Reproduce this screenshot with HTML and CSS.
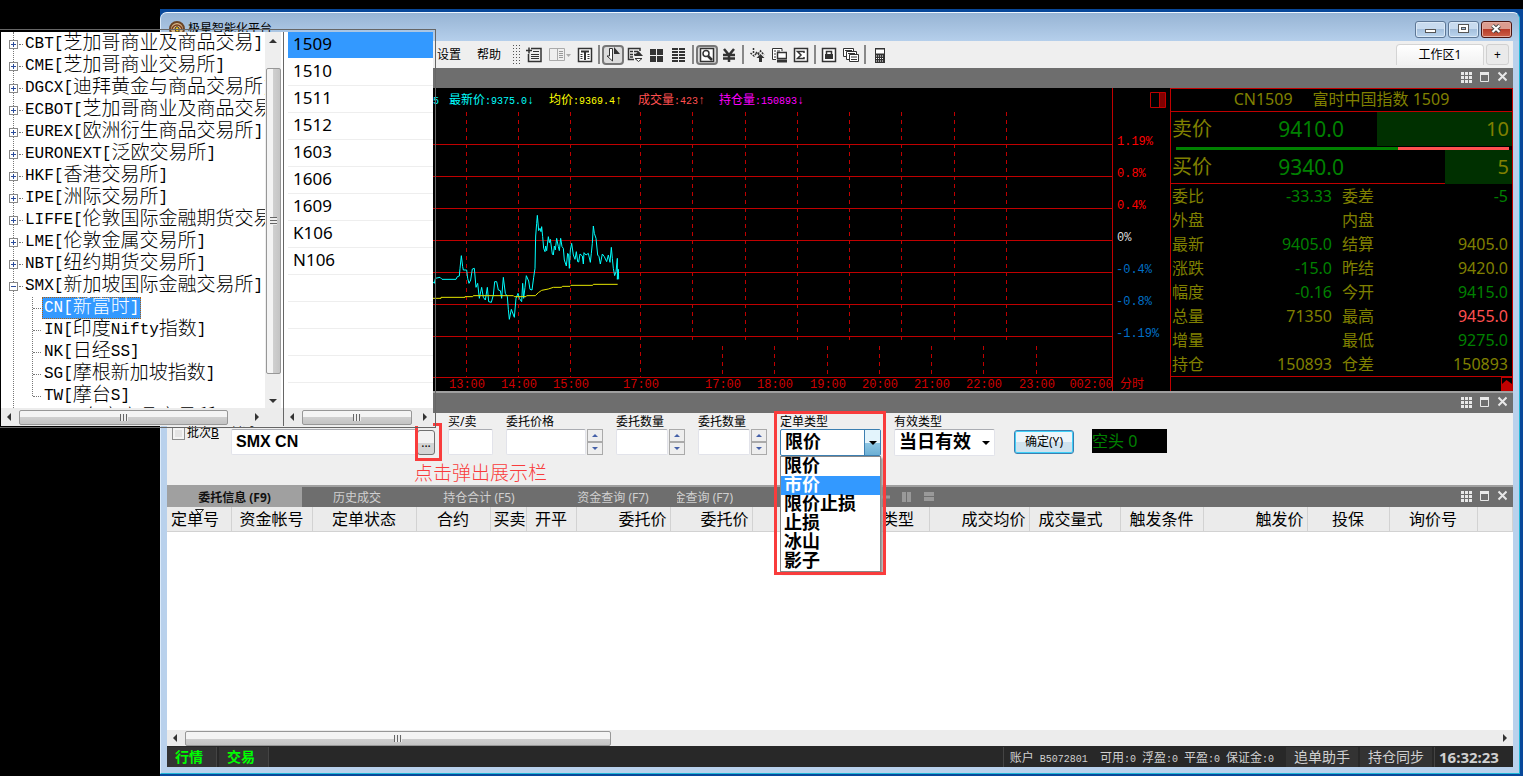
FILE: index.html
```html
<!DOCTYPE html>
<html lang="zh-CN">
<head>
<meta charset="utf-8">
<title>极星智能化平台</title>
<link rel="stylesheet" href="styles.css">
</head>
<body>
<div class="desktop">
<main class="window">
  <header class="titlebar">
    <svg class="app-icon" width="16" height="16" viewBox="0 0 16 16"><circle cx="8" cy="8" r="7" fill="#d9b98a" stroke="#6b4526" stroke-width="2"/><path d="M3 9a5 5 0 0 1 10 0" fill="none" stroke="#7a3c1c" stroke-width="1.5"/><path d="M6 7l2-1.5L10 7v4H7z" fill="#f2c21c" stroke="#333"/></svg>
    <h1 class="title">极星智能化平台</h1>
    <div class="win-buttons">
      <button class="win-btn" aria-label="最小化"><svg width="13" height="12" viewBox="0 0 13 12"><rect x="1.500" y="6.500" width="10" height="3" fill="#fff" stroke="#555"/></svg></button>
      <button class="win-btn" aria-label="最大化"><svg width="13" height="12" viewBox="0 0 13 12"><rect x="1.500" y="1.500" width="10" height="8" fill="#fff" stroke="#555"/><rect x="4.500" y="4.500" width="4" height="2" fill="#a5c0dd" stroke="#555"/></svg></button>
      <button class="win-btn close" aria-label="关闭"><svg width="13" height="12" viewBox="0 0 13 12"><path d="M2.500 2.500l7 6.500M9.500 2.500l-7 6.500" stroke="#444" stroke-width="4"/><path d="M2.500 2.500l7 6.500M9.500 2.500l-7 6.500" stroke="#fff" stroke-width="2.200"/></svg></button>
    </div>
  </header>

  <nav class="toolbar">
    <button class="menu">设置</button>
    <button class="menu">帮助</button>
    <span class="grip"></span>
    <button class="tool" aria-label="添加列表"><svg width="16" height="16" viewBox="0 0 16 16"><path d="M5 1.500h10v13H2.500V7M0 3.500h6M3 .5v6" fill="none" stroke="#333" stroke-width="1.500"/><path d="M7 4.500h6M5 7.500h8M5 9.500h8M5 11.500h8" stroke="#333"/></svg></button>
    <button class="tool wide" aria-label="面板"><svg width="24" height="16" viewBox="0 0 24 16"><path d="M1.500 1.500h15v12h-15zM9.500 1.500v12" fill="none" stroke="#aaa"/><path d="M11 4.500h4M11 6.500h4M11 8.500h4M11 10.500h4" stroke="#999"/><path d="M18 7h5l-2.500 3z" fill="#aaa"/></svg></button>
    <button class="tool" aria-label="文本"><svg width="16" height="16" viewBox="0 0 16 16"><path d="M1.500 1.500h13v13h-13z" fill="#fff" stroke="#333" stroke-width="1.500"/><path d="M4 4.500h8M8 4v9" stroke="#333" stroke-width="2"/><path d="M3.500 7.500h2M3.500 9.500h2M3.500 11.500h2M10.500 7.500h2M10.500 9.500h2M10.500 11.500h2" stroke="#333"/></svg></button>
    <span class="sep"></span>
    <button class="tool pressed" aria-label="买卖"><svg width="16" height="16" viewBox="0 0 16 16"><path d="M4.500 1.500h3V14L2 9h2.500z" fill="#fff" stroke="#333"/><path d="M9 0l6 7h-3H9v6z" fill="#333"/></svg></button>
    <button class="tool" aria-label="排序列表"><svg width="16" height="16" viewBox="0 0 16 16"><path d="M13 4V1.500H1.500v11H7" fill="none" stroke="#333" stroke-width="1.500"/><path d="M3 4.500h3M7 4.500h4M3 7.500h3M7 7.500h2M3 10h3" stroke="#333" stroke-width="1.500"/><path d="M7 9h9l-4.500-5z" fill="#333"/><path d="M8 11.500h7l-3.500 3z" fill="#fff" stroke="#333"/></svg></button>
    <button class="tool" aria-label="四格"><svg width="16" height="16" viewBox="0 0 16 16"><path d="M1 2h6v6H1zM8 2h6v6H8zM1 9h6v6H1zM8 9h6v6H8z" fill="#333"/></svg></button>
    <button class="tool" aria-label="列表"><svg width="16" height="16" viewBox="0 0 16 16"><path d="M1 2h6M8 2h6M1 5h6M8 5h6M1 8h6M8 8h6M1 11h6M8 11h6M1 14h6M8 14h6" stroke="#333" stroke-width="2"/></svg></button>
    <span class="sep"></span>
    <button class="tool pressed" aria-label="查询"><svg width="16" height="16" viewBox="0 0 16 16"><path d="M1.500 1.500h13v13h-13z" fill="#fff" stroke="#333" stroke-width="1.500"/><circle cx="7" cy="6.500" r="3" fill="none" stroke="#333" stroke-width="1.500"/><path d="M9 9l4 4" stroke="#333" stroke-width="2.500"/></svg></button>
    <button class="tool" aria-label="资金"><svg width="16" height="16" viewBox="0 0 16 16"><path d="M3 2l5 6 5-6M8 8v7M2 8h12M2 11.500h12" fill="none" stroke="#333" stroke-width="2.500"/></svg></button>
    <span class="sep"></span>
    <button class="tool" aria-label="转换"><svg width="16" height="16" viewBox="0 0 16 16"><path d="M4.500 1v5M1.500 6L5 9l2.500-3M7 5l3 3M9 7l2.500-3L15 8" fill="none" stroke="#333" stroke-width="1.500" stroke-dasharray="2 1"/><path d="M10 15v-4H7.500L11.500 7l4 4H13v4z" fill="#333"/></svg></button>
    <button class="tool" aria-label="窗口"><svg width="16" height="16" viewBox="0 0 16 16"><path d="M11 4V1.500H1.500v11H5" fill="#fff" stroke="#333"/><path d="M3 4h2M6 4h3M3 7h2M3 10h2" stroke="#333"/><path d="M6.500 5.500h9v6h-9z" fill="#fff" stroke="#333" stroke-width="1.500"/><path d="M6 14h10" stroke="#333" stroke-width="3"/></svg></button>
    <button class="tool" aria-label="合计"><svg width="16" height="16" viewBox="0 0 16 16"><path d="M1.500 1.500h13v13h-13z" fill="#fff" stroke="#333" stroke-width="1.500"/><path d="M11 6V4.500H4.500L8 8l-3.500 3.500H11V10" fill="none" stroke="#333" stroke-width="1.500"/></svg></button>
    <span class="sep"></span>
    <button class="tool" aria-label="锁定"><svg width="16" height="16" viewBox="0 0 16 16"><path d="M1.500 1.500h13v13h-13z" fill="#fff" stroke="#333" stroke-width="1.500"/><path d="M4 7h8v5H4z" fill="#333"/><path d="M5.500 7V4.500h5V7" fill="none" stroke="#333" stroke-width="1.500"/></svg></button>
    <button class="tool" aria-label="层叠"><svg width="16" height="16" viewBox="0 0 16 16"><path d="M.5 1.500h10v8H.5z" fill="#fff" stroke="#333"/><path d="M3.500 4.500h10v8h-10z" fill="#fff" stroke="#333"/><path d="M6.500 7.500h9v7h-9z" fill="#fff" stroke="#333"/><path d="M2 3.500h7M5 6.500h7M8 10h6M8 12.500h6" stroke="#333"/></svg></button>
    <span class="sep"></span>
    <button class="tool" aria-label="计算器"><svg width="16" height="16" viewBox="0 0 16 16"><path d="M4 1h10v15H4z" fill="#333"/><path d="M5 2.500h8v4H5z" fill="#fff"/><path d="M5 9h8M5 11.500h8M5 14h8" stroke="#fff" stroke-dasharray="1 1"/></svg></button>
    <div class="workspaces">
      <button class="workspace">工作区1</button>
      <button class="workspace add">+</button>
    </div>
  </nav>

  <div class="panel-bar first">
    <div class="panel-icons"><svg width="46" height="12" viewBox="0 0 46 12"><path d="M0 1h3v3H0zM4 1h3v3H4zM8 1h3v3H8zM0 5h3v3H0zM4 5h3v3H4zM8 5h3v3H8zM0 9h3v3H0zM4 9h3v3H4zM8 9h3v3H8z" fill="#e8e8e8"/><path d="M19.500 2h8v8.500h-8z" fill="none" stroke="#e8e8e8"/><path d="M19 2.500h9" stroke="#e8e8e8" stroke-width="3"/><path d="M37.500 1.500l8 8M45.500 1.500l-8 8" stroke="#e8e8e8" stroke-width="2"/></svg></div>
  </div>

  <section class="market">
    <svg class="chart" viewBox="167 88 1003 303" role="img" aria-label="分时走势">
      <g class="grid">
        <path d="M167 144.500h946M167 176.500h946M167 208.500h946M167 240.500h946M167 272.500h946M167 304.500h946M167 336.500h946M167 377.500h946M1112.500 88v303"/>
        <path class="dash" d="M466.500 112v265M518.500 112v265M570.500 112v265M640.500 112v265M692.500 112v232M745.500 112v232M797.500 112v232M849.500 112v232M901.500 112v232M954.500 112v232M1006.500 112v232M722.500 346v30M774.500 346v30M827.500 346v30M879.500 346v30M931.500 346v30M983.500 346v30M1036.500 346v30"/>
        <path d="M1150.500 92.500h15v15h-15zM1159.500 92v15"/>
      </g>
      <path d="M1160 93h5v14h-5z" fill="#800000"/>
      <svg x="430" y="200" width="380" height="200" viewBox="0 0 1140 600">
        <polyline class="price" points="9,245 13,250 16,235 30,232 36,238 78,238 82,230 88,228 90,205 94,167 98,200 100,210 110,210 113,235 117,250 122,240 127,207 133,205 138,262 143,250 148,295 155,262 160,292 166,300 172,262 176,305 184,307 190,285 194,245 200,245 205,270 211,272 215,295 220,232 226,280 232,290 235,328 238,358 244,328 253,352 258,295 264,280 268,295 275,305 278,250 281,295 285,262 289,227 296,243 300,268 306,270 311,232 315,205 317,108 320,70 322,46 326,92 330,85 333,95 335,80 338,110 341,145 345,155 347,138 350,152 355,110 358,128 361,118 367,162 370,165 373,138 376,150 380,115 385,140 388,152 392,115 396,140 400,145 403,180 409,198 413,160 416,165 418,205 421,150 425,130 430,165 435,178 439,155 443,185 446,186 450,162 457,168 460,192 462,158 468,165 475,160 481,187 484,160 487,130 490,78 493,100 498,115 503,165 507,170 511,192 517,162 523,170 530,185 535,165 540,187 544,142 547,175 550,205 554,227 558,215 562,175 562,238 565,208 566,238"/>
        <polyline class="average" points="9,295 33,295 33,292 105,292 105,290 128,290 130,287 250,287 253,290 288,290 290,287 316,287 325,278 335,271 355,267 370,262 395,262 397,259 420,259 423,256 488,256 490,253 563,253"/>
      </svg>
      <g class="legend">
        <text x="433" y="104" fill="#0ff">5</text>
        <text x="449" y="104" fill="#0ff"><tspan class="zh">最新价</tspan>:9375.0<tspan class="dir">↓</tspan></text>
        <text x="549" y="104" fill="#ff0"><tspan class="zh">均价</tspan>:9369.4<tspan class="dir">↑</tspan></text>
        <text x="638" y="104" fill="#ff5050"><tspan class="zh">成交量</tspan>:423<tspan class="dir">↑</tspan></text>
        <text x="719" y="104" fill="#f0f"><tspan class="zh">持仓量</tspan>:150893<tspan class="dir">↓</tspan></text>
      </g>
      <g class="axis times">
        <text x="467" y="388">13:00</text><text x="519" y="388">14:00</text><text x="571" y="388">15:00</text><text x="641" y="388">17:00</text><text x="723" y="388">17:00</text><text x="775" y="388">18:00</text><text x="828" y="388">19:00</text><text x="880" y="388">20:00</text><text x="932" y="388">21:00</text><text x="984" y="388">22:00</text><text x="1037" y="388">23:00</text><text x="1091" y="388">002:00</text><text x="1132" y="388">分时</text>
      </g>
      <g class="axis">
        <text x="1117" y="145" fill="#f00">1.19%</text><text x="1117" y="177" fill="#f00">0.8%</text><text x="1117" y="209" fill="#f00">0.4%</text><text x="1117" y="241" fill="#ddd">0%</text><text x="1116" y="273" fill="#0070c8">-0.4%</text><text x="1116" y="305" fill="#0070c8">-0.8%</text><text x="1116" y="337" fill="#0070c8">-1.19%</text>
      </g>
    </svg>

    <section class="quote">
      <h2 class="quote-title"><span>CN1509</span><span>富时中国指数 1509</span></h2>
      <div class="level"><span>卖价</span><span class="level-price">9410.0</span><span class="volume ask">10</span></div>
      <div class="ratio"></div>
      <div class="level buy"><span>买价</span><span class="level-price">9340.0</span><span class="volume bid">5</span></div>
      <table class="quote-table">
        <tr><th>委比</th><td class="down">-33.33</td><th>委差</th><td class="down">-5</td></tr>
        <tr><th>外盘</th><td></td><th>内盘</th><td></td></tr>
        <tr><th>最新</th><td class="down">9405.0</td><th>结算</th><td>9405.0</td></tr>
        <tr><th>涨跌</th><td class="down">-15.0</td><th>昨结</th><td>9420.0</td></tr>
        <tr><th>幅度</th><td class="down">-0.16</td><th>今开</th><td class="down">9415.0</td></tr>
        <tr><th>总量</th><td>71350</td><th>最高</th><td class="up">9455.0</td></tr>
        <tr><th>增量</th><td></td><th>最低</th><td class="down">9275.0</td></tr>
        <tr><th>持仓</th><td>150893</td><th>仓差</th><td>150893</td></tr>
      </table>
      <div class="quote-foot"><svg width="11" height="14" viewBox="0 0 11 14"><path d="M0 0h11v14H0z" fill="#c00000"/><path d="M1 1h10v6L5.500 3 1 7z" fill="#000"/></svg></div>
    </section>
  </section>

  <div class="panel-bar">
    <div class="panel-icons"><svg width="46" height="12" viewBox="0 0 46 12"><path d="M0 1h3v3H0zM4 1h3v3H4zM8 1h3v3H8zM0 5h3v3H0zM4 5h3v3H4zM8 5h3v3H8zM0 9h3v3H0zM4 9h3v3H4zM8 9h3v3H8z" fill="#e8e8e8"/><path d="M19.500 2h8v8.500h-8z" fill="none" stroke="#e8e8e8"/><path d="M19 2.500h9" stroke="#e8e8e8" stroke-width="3"/><path d="M37.500 1.500l8 8M45.500 1.500l-8 8" stroke="#e8e8e8" stroke-width="2"/></svg></div>
  </div>

  <form class="order">
    <label class="batch"><input type="checkbox">批次<u>B</u></label>
    <div class="field contract">
      <label for="contract">合约</label>
      <div class="row"><input id="contract" type="text" value="SMX CN"><button class="more" type="button" aria-label="选择合约">...</button></div>
      <span class="mark mark-more"></span>
      <p class="note">点击弹出展示栏</p>
    </div>
    <div class="field side"><label for="side">买/卖</label><input id="side" type="text"></div>
    <div class="field price-field"><label for="price">委托价格</label><div class="row"><input id="price" type="text"><span class="spin"><button type="button" aria-label="增加"></button><button type="button" aria-label="减少" class="dec"></button></span></div></div>
    <div class="field qty"><label for="qty">委托数量</label><div class="row"><input id="qty" type="text"><span class="spin"><button type="button" aria-label="增加"></button><button type="button" aria-label="减少" class="dec"></button></span></div></div>
    <div class="field qty"><label for="qty2">委托数量</label><div class="row"><input id="qty2" type="text"><span class="spin"><button type="button" aria-label="增加"></button><button type="button" aria-label="减少" class="dec"></button></span></div></div>
    <div class="field choice open">
      <label for="type">定单类型</label>
      <select id="type"><option>限价</option><option>市价</option><option>限价止损</option><option>止损</option><option>冰山</option><option>影子</option></select>
      <span class="arrow"></span>
      <ul class="options"><li>限价</li><li class="on">市价</li><li>限价止损</li><li>止损</li><li>冰山</li><li>影子</li></ul>
      <span class="mark mark-type"></span>
    </div>
    <div class="field choice">
      <label for="valid">有效类型</label>
      <select id="valid"><option>当日有效</option></select>
      <span class="arrow"></span>
    </div>
    <button class="confirm" type="button">确定(Y)</button>
    <output class="position">空头 0</output>
  </form>

  <div class="tabs">
    <button class="tab active">委托信息 (F9)</button>
    <button class="tab history">历史成交</button>
    <button class="tab">持仓合计 (F5)</button>
    <button class="tab">资金查询 (F7)</button>
    <button class="tab cut">资金查询 (F7)</button>
    <svg class="layout-icons" width="56" height="12" viewBox="0 0 56 12"><path d="M0 6h11M5.500 1v10" stroke="#999" stroke-width="3"/><path d="M23 1h4v10h-4zM28 1h4v10h-4zM45 1h10v4H45zM45 6h10v4H45z" fill="#999"/></svg>
    <div class="panel-icons"><svg width="46" height="12" viewBox="0 0 46 12"><path d="M0 1h3v3H0zM4 1h3v3H4zM8 1h3v3H8zM0 5h3v3H0zM4 5h3v3H4zM8 5h3v3H8zM0 9h3v3H0zM4 9h3v3H4zM8 9h3v3H8z" fill="#e8e8e8"/><path d="M19.500 2h8v8.500h-8z" fill="none" stroke="#e8e8e8"/><path d="M19 2.500h9" stroke="#e8e8e8" stroke-width="3"/><path d="M37.500 1.500l8 8M45.500 1.500l-8 8" stroke="#e8e8e8" stroke-width="2"/></svg></div>
  </div>

  <section class="orders">
    <table class="orders-table">
      <colgroup><col class="w64"><col class="w81"><col class="w104"><col class="w74"><col class="w36"><col class="w50"><col class="w94"><col class="w82"><col class="w83"><col class="w94"><col class="w100"><col class="w91"><col class="w83"><col class="w104"><col class="w82"><col class="w88"><col></colgroup>
      <thead><tr><th class="left sorted">定单号<svg class="sort" width="9" height="6" viewBox="0 0 9 6"><path d="M.5.5h8l-4 4.500z" fill="#fff" stroke="#222"/></svg></th><th>资金帐号</th><th>定单状态</th><th>合约</th><th>买卖</th><th>开平</th><th class="right">委托价</th><th class="right">委托价</th><th></th><th>定单类型</th><th class="right">成交均价</th><th class="left wide-left">成交量式</th><th>触发条件</th><th class="right">触发价</th><th>投保</th><th>询价号</th><th></th></tr></thead>
    </table>
  </section>
  <div class="hbar"><i class="tri west"></i><span class="thumb"></span><i class="tri east"></i></div>

  <footer class="status">
    <button class="view">行情</button>
    <button class="view">交易</button>
    <div class="account"><span><span class="zh">账户</span> B5072801</span><span><span class="zh">可用</span>:0 <span class="zh">浮盈</span>:0 <span class="zh">平盈</span>:0 <span class="zh">保证金</span>:0</span></div>
    <button class="helper">追单助手</button>
    <button class="helper">持仓同步</button>
    <time class="clock">16:32:23</time>
  </footer>
</main>
</div>

<aside class="picker">
  <div class="tree-pane">
    <div class="tree-view">
      <ul class="tree">
        <li><i class="box"></i>CBT[<b>芝加哥商业及商品交易</b>]</li>
        <li><i class="box"></i>CME[<b>芝加哥商业交易所</b>]</li>
        <li><i class="box"></i>DGCX[<b>迪拜黄金与商品交易所</b>]</li>
        <li><i class="box"></i>ECBOT[<b>芝加哥商业及商品交易</b>]</li>
        <li><i class="box"></i>EUREX[<b>欧洲衍生商品交易所</b>]</li>
        <li><i class="box"></i>EURONEXT[<b>泛欧交易所</b>]</li>
        <li><i class="box"></i>HKF[<b>香港交易所</b>]</li>
        <li><i class="box"></i>IPE[<b>洲际交易所</b>]</li>
        <li><i class="box"></i>LIFFE[<b>伦敦国际金融期货交易所</b>]</li>
        <li><i class="box"></i>LME[<b>伦敦金属交易所</b>]</li>
        <li><i class="box"></i>NBT[<b>纽约期货交易所</b>]</li>
        <li class="expanded"><i class="box minus"></i>SMX[<b>新加坡国际金融交易所</b>]
          <ul class="branch">
            <li><span class="picked">CN[<b>新富时</b>]</span></li>
            <li><span>IN[<b>印度</b>Nifty<b>指数</b>]</span></li>
            <li><span>NK[<b>日经</b>SS]</span></li>
            <li><span>SG[<b>摩根新加坡指数</b>]</span></li>
            <li><span>TW[<b>摩台</b>S]</span></li>
          </ul>
        </li>
        <li><i class="box"></i>TOCOM[<b>东京商品交易所</b>]</li>
      </ul>
      <div class="vbar"><i class="tri north"></i><span class="thumb"></span><i class="tri south"></i></div>
    </div>
    <div class="hbar"><i class="tri west"></i><span class="thumb"></span><i class="tri east"></i></div>
  </div>
  <div class="month-pane">
    <ul class="months"><li class="on">1509</li><li>1510</li><li>1511</li><li>1512</li><li>1603</li><li>1606</li><li>1609</li><li>K106</li><li>N106</li><li></li><li></li><li></li><li></li><li></li></ul>
    <div class="hbar"><i class="tri west"></i><span class="thumb"></span><i class="tri east"></i></div>
  </div>
</aside>
</body>
</html>
```
FILE: styles.css
```css
* { box-sizing: border-box; }
body {
  margin: 0;
  min-height: 100vh;
  display: flex;
  background: #000;
  color: #000;
  font: 12px/16px "Noto Sans", "Noto Sans CJK SC", sans-serif;
  overflow: hidden;
}
ul, h1, h2, p { margin: 0; padding: 0; list-style: none; font-size: inherit; font-weight: normal; }
button { border: 0; padding: 0; background: none; color: inherit; font: inherit; }
svg { display: block; flex: none; }

.desktop { flex: 1; min-width: 0; display: flex; margin: 9px 0 0 160px; padding: 3px 3px 2px 0; background: #08489a; }
.window { flex: 1; min-width: 0; display: flex; flex-direction: column; padding: 0 6px 6px; border: 1px solid; border-color: #eef6ff #20b8d8 #20b8d8 #dcebfa; border-radius: 7px 7px 0 0; background: #b9d1ec; }

.titlebar { height: 28px; display: flex; align-items: center; margin: 0 -6px; padding: 4px 7px 0 8px; gap: 3px; border-radius: 6px 6px 0 0; background: linear-gradient(#97b4d4, #b5cfeb); }
.title { flex: 1; }
.win-buttons { display: flex; gap: 2px; height: 24px; align-items: center; }
.win-btn { width: 31px; height: 17px; display: flex; align-items: center; justify-content: center; border: 1px solid #5d7796; border-radius: 3px; background: linear-gradient(#c8dbef 45%, #a5c0dd 50%, #bcd5ee); box-shadow: inset 0 0 0 1px #dbe9f7; }
.win-btn.close { border-color: #4b1410; background: linear-gradient(#dc9c8f 45%, #b83c28 50%, #cc6048); box-shadow: inset 0 0 0 1px #e3aca0; }

.toolbar { height: 27px; display: flex; align-items: center; padding: 0 4px 0 270px; background: #efefef; }
.menu { width: 40px; text-align: left; flex: none; }
.menu + .menu { width: 36px; }
.grip { flex: none; width: 7px; height: 20px; margin-right: 3px; background: repeating-linear-gradient(transparent 0 1px, #efefef 1px 3px), repeating-linear-gradient(90deg, #555 0 1px, transparent 1px 3px); }
.tool { flex: none; width: 22px; height: 20px; display: flex; align-items: center; justify-content: center; }
.tool.wide { width: 29px; }
.pressed { border: 2px solid #777; border-radius: 4px; background: #dcdcdc; }
.sep { flex: none; width: 2px; height: 19px; margin: 0 2px; background: #888; }
.workspaces { margin-left: auto; display: flex; gap: 2px; height: 21px; }
.workspace { width: 88px; border: 1px solid #d4d4d4; border-bottom: 0; border-radius: 4px 4px 0 0; background: linear-gradient(#fff, #f1f1f1); }
.workspace.add { width: 23px; border: 1px solid #d0d0d0; border-radius: 3px; background: #eaeaea; }

.panel-bar { height: 22px; display: flex; align-items: center; border-top: 2px solid #a0a0a0; background: #6e6e6e; }
.panel-bar.first { height: 20px; border-top: 0; }
.panel-icons { margin-left: auto; padding: 0 6px 2px 0; }

.market { display: flex; background: #000; height: 303px; }
.chart { flex: 1 1 0; min-width: 0; height: 303px; }
.grid { fill: none; stroke: #c00000; }
.dash { stroke-dasharray: 4 4; }
.price { fill: none; stroke: #0ff; stroke-width: 3px; }
.average { fill: none; stroke: #e6e600; stroke-width: 3px; }
.legend { font: 10px "Liberation Mono", "Noto Sans CJK SC", monospace; }
.dir { font: 12px "Liberation Mono", monospace; }
.zh { font: 12px "Noto Sans CJK SC", sans-serif; }
.axis { font: 12px "Liberation Mono", "Noto Sans CJK SC", monospace; }
.times { fill: #d00000; text-anchor: middle; }

.quote { flex: none; width: 343px; display: flex; flex-direction: column; border: 1px solid #c00000; border-bottom: 0; color: #808000; font-size: 16px; line-height: 24px; }
.quote-title { height: 24px; display: flex; justify-content: center; gap: 20px; border-bottom: 1px solid #c00000; line-height: 21px; }
.level { height: 35px; display: flex; align-items: center; font-size: 20px; line-height: 34px; padding-left: 1px; }
.level.buy { height: 34px; border-bottom: 1px solid #c00000; }
.level-price { width: 132px; text-align: right; color: #008000; font-size: 21px; }
.volume { margin-left: auto; height: 34px; padding-right: 3px; text-align: right; background: #003000; }
.ask { width: 135px; }
.bid { width: 67px; }
.ratio { height: 3px; margin: 1px 3px 0 5px; background: linear-gradient(90deg, #008000 222px, #ff5050 222px); }
.quote-table { width: 100%; border-collapse: collapse; table-layout: fixed; border-bottom: 1px solid #c00000; }
.quote-table th { width: 46px; padding: 0 0 0 1px; text-align: left; font-weight: normal; }
.quote-table th + td { padding: 0 4px 0 0; text-align: right; }
.quote-table td:nth-child(2) { width: 116px; padding-right: 1px; }
.quote-table th:nth-child(3) { padding-left: 9px; width: 54px; }
.quote-table tr { height: 24px; }
.down { color: #008000; }
.quote-table .up { color: #ff5050; }
.quote-foot { display: flex; justify-content: flex-end; }

.order { height: 72px; flex: none; display: flex; gap: 13px; padding-left: 5px; background: #efefef; }
.batch { width: 46px; margin-top: 12px; height: 16px; display: flex; align-items: center; white-space: nowrap; }
.batch input { appearance: none; width: 13px; height: 13px; margin: 0 2px 0 0; flex: none; border: 1px solid #8e8f8f; background: #e4e4e4; box-shadow: inset 0 0 0 2px #f4f4f4; }
.field { position: relative; flex: none; }
.field > label { display: block; height: 16px; line-height: 18px; white-space: nowrap; }
.contract { width: 204px; }
.side { width: 45px; }
.price-field { width: 97px; }
.qty { width: 69px; }
.choice { width: 101px; }
.row { display: flex; }
.field input { flex: 1; width: 100%; min-width: 0; height: 26px; padding: 0 4px; border: 1px solid #e2e3ea; border-top-color: #abadb3; border-radius: 2px; background: #fff; font: bold 16px "Liberation Sans", Arial, sans-serif; }
.more { width: 18px; height: 25px; margin-top: 1px; border: 1px solid #707070; border-radius: 3px; background: linear-gradient(#f2f2f2 50%, #d4d4d4 50%); }
.spin { width: 16px; display: flex; flex-direction: column; margin-left: 1px; }
.spin button { height: 13px; border: 1px solid #aaa; background: #eee; display: flex; align-items: center; justify-content: center; }
.spin button::before { content: ""; border: 3px solid transparent; border-top: 0; border-bottom-color: #4560a8; }
.spin .dec::before { border-top: 3px solid #4560a8; border-bottom: 0; }
.choice select { display: block; appearance: none; width: 100%; height: 27px; padding: 0 4px 5px; border: 1px solid #e2e3ea; border-top-color: #abadb3; border-radius: 2px; background: #fff; color: #000; font: bold 18px/20px "Noto Sans CJK SC", sans-serif; }
.open select { border-color: #3c7fb1; }
.arrow { position: absolute; right: 1px; top: 17px; width: 16px; height: 25px; display: flex; align-items: center; justify-content: center; pointer-events: none; }
.arrow::before { content: ""; border: 4px solid transparent; border-top-color: #000; border-bottom: 0; }
.open .arrow { border-left: 1px solid #3c7fb1; background: linear-gradient(#e3f4fc 50%, #8fc7e4 50%, #6db0d5); }
.options { position: absolute; top: 43px; left: 0; width: 101px; z-index: 2; border: 1px solid #888; background: #fff; box-shadow: 2px 2px 2px #999; font: bold 18px/15px "Noto Sans CJK SC", sans-serif; }
.options li { height: 19px; padding-left: 3px; }
.options .on { background: #3399ff; color: #fff; }
.mark { position: absolute; z-index: 3; border: 3px solid #f93c3c; pointer-events: none; }
.mark-more { left: 184px; top: 10px; width: 27px; height: 38px; }
.mark-type { left: -6px; top: -2px; width: 112px; height: 164px; }
.note { position: absolute; left: 183px; top: 48px; color: #f93c3c; font: 300 19px/22px "Noto Sans CJK SC", sans-serif; white-space: nowrap; z-index: 1; }
.confirm { flex: none; width: 60px; height: 24px; margin: 17px 5px 0 6px; border: 1px solid #3c7fb1; border-radius: 3px; background: linear-gradient(#eef5fa 50%, #cfe2ee 50%); box-shadow: inset 0 0 0 1px #3fd0f8; }
.position { width: 75px; height: 24px; margin-top: 16px; background: #000; color: #008000; font-size: 16px; line-height: 24px; }

.tabs { height: 22px; flex: none; display: flex; border-top: 2px solid #a0a0a0; background: #6e6e6e; color: #d0d0d0; }
.tab { width: 134px; flex: none; line-height: 21px; }
.tab.active { width: 135px; background: #a0a0a0; color: #111; font-weight: bold; }
.tab.history { width: 110px; }
.tab.cut { width: 56px; display: flex; justify-content: flex-end; overflow: hidden; white-space: nowrap; margin-left: -3px; }
.layout-icons { align-self: center; margin-left: 146px; }
.tabs .panel-icons { align-self: center; }

.orders { flex: 1; background: #fff; overflow: hidden; }
.orders-table { width: 100%; border-collapse: collapse; table-layout: fixed; background: #ebebeb; font-size: 16px; line-height: 21px; }
.orders-table th { height: 24px; padding: 2px 3px 0; border-right: 1px solid #d2d2d2; border-bottom: 1px solid #d2d2d2; font-weight: normal; white-space: nowrap; }
.orders-table .left { text-align: left; padding-left: 4px; }
.orders-table .wide-left { padding-left: 9px; }
.orders-table .right { text-align: right; }
.sorted { position: relative; }
.sort { position: absolute; left: 28px; top: 2px; }
.w64 { width: 64px; } .w81 { width: 81px; } .w104 { width: 104px; } .w74 { width: 74px; }
.w36 { width: 36px; } .w50 { width: 50px; } .w94 { width: 94px; } .w82 { width: 82px; }
.w100 { width: 100px; } .w91 { width: 91px; } .w83 { width: 83px; } .w88 { width: 88px; }

.hbar { flex: none; height: 16px; display: flex; align-items: center; padding: 0 6px; background: #ececec; }
.hbar .thumb { width: 426px; height: 15px; margin: 0 auto 0 8px; border: 1px solid #979797; border-radius: 2px; display: flex; align-items: center; justify-content: center; background: linear-gradient(#f4f4f4 50%, #cfcfcf 50%, #c4c4c4); }
.hbar .thumb::before { content: ""; width: 8px; height: 7px; background: repeating-linear-gradient(90deg, #666 0 1px, #eee 1px 3px); }
.tri { width: 0; height: 0; flex: none; border: 4px solid transparent; }
.west { border-left: 0; border-right-color: #333; }
.east { border-right: 0; border-left-color: #333; }
.north { border-top: 0; border-bottom-color: #333; }
.south { border-bottom: 0; border-top-color: #333; }

.status { flex: none; height: 21px; display: flex; padding-top: 1px; gap: 2px; background: #282828; color: #d0d0d0; line-height: 20px; }
.view { width: 50px; border-right: 1px solid #444; background: #333; color: #0f0; font-size: 14px; font-weight: bold; padding-right: 5px; }
.account { margin-left: auto; display: flex; gap: 12px; padding: 0 10px 0 6px; border-left: 1px solid #444; font: 10px/20px "Liberation Mono", monospace; white-space: nowrap; }
.account .zh { line-height: 20px; }
.helper { width: 72px; background: #333; font-size: 14px; }
.clock { width: 79px; padding-left: 4px; border-left: 1px solid #444; font-size: 15px; font-weight: bold; }

.picker { position: absolute; left: 0; top: 29px; z-index: 5; display: flex; width: 436px; height: 399px; border: 1px solid #666; border-left: 0; padding: 2px 2px 1px 0; }
.tree-pane { width: 284px; display: flex; flex-direction: column; border-left: 1px solid #000; border-right: 1px solid #666; background: #fff; }
.tree-view { flex: 1; min-height: 0; display: flex; overflow: hidden; }
.tree { position: relative; width: 264px; overflow: hidden; font: 16px/24px "Liberation Mono", monospace; }
.tree::before { content: ""; position: absolute; left: 12px; top: 0; height: 100%; border-left: 1px dotted #777; }
.tree b { font: 300 19px/0 "Noto Sans CJK SC", sans-serif; vertical-align: -1px; }
.tree li { padding-left: 24px; height: 22px; white-space: nowrap; position: relative; }
.tree .expanded { height: 132px; }
.box { position: absolute; left: 8px; top: 8px; width: 9px; height: 9px; border: 1px solid #888; background: linear-gradient(#2b4c9b, #2b4c9b) center / 5px 1px no-repeat, linear-gradient(#2b4c9b, #2b4c9b) center / 1px 5px no-repeat, #fff; }
.box.minus { background: linear-gradient(#2b4c9b, #2b4c9b) center / 5px 1px no-repeat, #fff; }
.box::after { content: ""; position: absolute; left: 9px; top: 3px; width: 4px; border-top: 1px dotted #777; }
.tree .branch li { padding-left: 17px; }
.branch { position: relative; margin-top: -1px; }
.branch::before { content: ""; position: absolute; left: 7px; top: 0; height: 99px; border-left: 1px dotted #777; }
.branch li::before { content: ""; position: absolute; left: 8px; top: 11px; width: 8px; border-top: 1px dotted #777; }
.branch span { display: block; width: fit-content; height: 22px; padding: 0 1px; border: 1px solid transparent; line-height: 20px; }
.branch .picked { background: #3399ff; color: #fff; border: 1px dotted #b06010; }
.vbar { width: 16px; display: flex; flex-direction: column; align-items: center; padding: 7px 0 5px; background: #eee; }
.vbar .thumb { flex: 1; width: 15px; margin: 25px 0; border: 1px solid #979797; border-radius: 2px; background: linear-gradient(90deg, #f4f4f4 50%, #cfcfcf 50%, #c4c4c4); display: flex; align-items: center; justify-content: center; }
.vbar .thumb::before { content: ""; width: 7px; height: 8px; background: repeating-linear-gradient(#666 0 1px, #eee 1px 3px); }
.tree-pane .hbar { height: 18px; padding-right: 24px; }
.tree-pane .hbar .thumb { width: 209px; }
.month-pane { flex: 1; display: flex; flex-direction: column; background: #fff; }
.months { flex: 1; min-height: 0; overflow: hidden; font-size: 17px; line-height: 23px; }
.months li { height: 27px; padding-left: 5px; margin-left: 4px; border-bottom: 1px solid #eee; }
.months .on { background: #3399ff; border-bottom-color: #fff; }
.month-pane .hbar { height: 18px; }
.month-pane .hbar .thumb { width: 110px; }
```
